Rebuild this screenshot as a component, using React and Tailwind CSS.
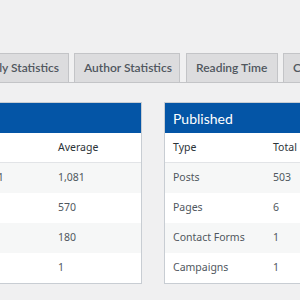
const font = { fontFamily: 'Lato, "Noto Sans", sans-serif' };
const body = { fontFamily: '"Noto Sans", "Open Sans", sans-serif' };

const words = [
  ["Posts", "543,791", "1,081"],
  ["Pages", "3,420", "570"],
  ["Contact Forms", "180", "180"],
  ["Campaigns", "1", "1"],
];

const published = [
  ["Posts", "503"],
  ["Pages", "6"],
  ["Contact Forms", "1"],
  ["Campaigns", "1"],
];

const tabCls =
  "shrink-0 h-[29px] flex items-center bg-[#dcdcde] border border-b-0 border-[#c3c4c7] text-[12px] font-semibold text-[#50575e] whitespace-nowrap";

function Panel({ title, head, rows, cols, className = "" }) {
  return (
    <div className={`w-[300px] shrink-0 border border-[#c8cdd3] bg-white ${className}`}>
      <div className="h-[30px] bg-[#0455a6] px-[8px] flex items-center text-white text-[14px]">{title}</div>
      <div style={body} className="flex h-[30px] items-center border-b border-[#e2e4e7] text-[10.5px] text-[#2c3338]">
        {head.map((h, i) => (
          <div key={h} className={`${cols[i]} px-[8px]`}>{h}</div>
        ))}
      </div>
      {rows.map((r, ri) => (
        <div key={ri} style={body} className={`flex h-[30px] items-center text-[10.5px] text-[#50575e] ${ri % 2 === 0 ? "bg-[#f6f7f7]" : "bg-white"}`}>
          {r.map((c, i) => (
            <div key={i} className={`${cols[i]} px-[8px] whitespace-nowrap`}>{c}</div>
          ))}
        </div>
      ))}
    </div>
  );
}

export default function App() {
  return (
    <div className="w-[300px] h-[300px] overflow-hidden bg-[#f0f0f1]" style={font}>
      <div className="pt-[53px]">
        <div className="flex items-end border-b border-[#c3c4c7] h-[30px]">
          <div className={`${tabCls} w-[130px] ml-[-61px] justify-end pr-[9px]`}>Monthly Statistics</div>
          <div className={`${tabCls} w-[106px] ml-[5px] px-[9px]`}>Author Statistics</div>
          <div className={`${tabCls} w-[92px] ml-[6px] px-[9px]`}>Reading Time</div>
          <div className={`${tabCls} w-[90px] ml-[5px] px-[9px]`}>Categories</div>
        </div>

        <div className="flex gap-[22px] mt-[19px]">
          <Panel
            className="ml-[-158px]"
            title="Words"
            head={["Type", "Total", "Average"]}
            rows={words}
            cols={["w-[114px]", "w-[93px]", "flex-1"]}
          />
          <Panel
            title="Published"
            head={["Type", "Total"]}
            rows={published}
            cols={["w-[100px]", "flex-1"]}
          />
        </div>
      </div>
    </div>
  );
}
